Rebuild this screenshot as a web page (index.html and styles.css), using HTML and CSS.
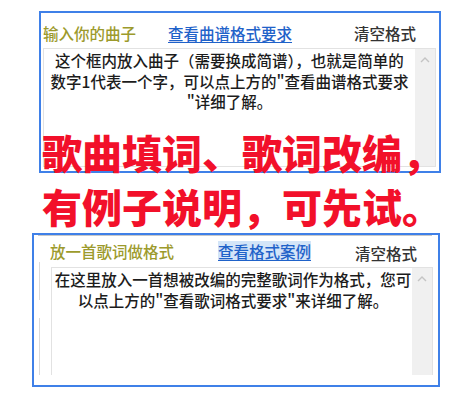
FILE: index.html
```
<!DOCTYPE html>
<html lang="zh-CN">
<head>
    <meta charset="UTF-8">
    <title>歌曲填词</title>
    <link rel="stylesheet" href="styles.css">
</head>
<body>
    <div class="panel panel-song">
        <div class="toolbar">
            <span class="label label-song">输入你的曲子</span>
            <a class="link link-song" href="#">查看曲谱格式要求</a>
            <span class="clear">清空格式</span>
        </div>
        <div class="editor editor-song">
            <div class="editor-text">这个框内放入曲子（需要换成简谱），也就是简单的<br>数字1代表一个字，可以点上方的"查看曲谱格式要求<br>"详细了解。</div>
            <div class="scrollbar">
                <svg width="10" height="6" viewBox="0 0 10 6"><polyline points="1,5 5,1 9,5" fill="none" stroke="#c4c4c4" stroke-width="1.4"/></svg>
            </div>
        </div>
    </div>

    <div class="promo">歌曲填词、歌词改编，<br>有例子说明，可先试。</div>

    <div class="panel panel-lyric">
        <div class="rule"></div>
        <div class="toolbar">
            <span class="label label-lyric">放一首歌词做格式</span>
            <a class="link link-lyric" href="#">查看格式案例</a>
            <span class="clear">清空格式</span>
        </div>
        <div class="editor-row">
            <div class="side-line"></div>
            <div class="editor editor-lyric">
                <div class="editor-text">在这里放入一首想被改编的完整歌词作为格式，您可<br>以点上方的"查看歌词格式要求"来详细了解。</div>
                <div class="scrollbar">
                    <svg width="10" height="6" viewBox="0 0 10 6"><polyline points="1,5 5,1 9,5" fill="none" stroke="#c4c4c4" stroke-width="1.4"/></svg>
                </div>
            </div>
        </div>
    </div>
</body>
</html>
```

FILE: styles.css
```
body {
    margin: 0;
    width: 472px;
    height: 396px;
    overflow: hidden;
    background: #fff;
    font-family: "Noto Sans CJK SC", "Noto Sans", sans-serif;
    color: #222;
}
.panel {
    box-sizing: border-box;
    border: 2px solid #3f80e8;
    display: flex;
    flex-direction: column;
}
.panel-song {
    margin: 11px 0 0 39px;
    width: 402px;
    height: 162px;
}
.panel-lyric {
    margin: 0 0 0 32px;
    width: 408px;
    height: 154px;
}
.toolbar {
    display: flex;
    align-items: center;
    height: 20px;
    font-size: 15.5px;
    line-height: 20px;
    font-weight: 500;
    white-space: nowrap;
}
.panel-song .toolbar {
    margin-top: 10px;
    padding-left: 2px;
}
.panel-lyric .toolbar {
    margin-top: 5px;
    padding-left: 16px;
}
.label {
    color: #9c9a2c;
}
.label-song {
    width: 125px;
}
.label-lyric {
    width: 168px;
}
.link {
    color: #1f62c9;
    text-decoration: underline;
    text-underline-offset: 2px;
}
.link-song {
    width: 186px;
}
.link-lyric {
    margin-right: 44px;
    background: #d3e5f8;
}
.clear {
    color: #333;
}
.panel-lyric .clear {
    margin-top: 3px;
}
.editor {
    display: flex;
    box-sizing: border-box;
    border: 1px solid #e2e2e2;
    background: #fff;
}
.editor-song {
    margin: 5px 3px 0 2px;
    height: 119px;
}
.editor-text {
    flex: 1;
    text-align: center;
    font-size: 15.5px;
    line-height: 20.5px;
    font-weight: 500;
    color: #1c1c1c;
    white-space: nowrap;
    overflow: hidden;
}
.editor-song .editor-text {
    padding-top: 1px;
}
.editor-lyric .editor-text {
    padding-top: 1px;
    padding-left: 2px;
}
.scrollbar {
    width: 20px;
    background: #f0f0f0;
    display: flex;
    justify-content: center;
    padding-top: 8px;
    box-sizing: border-box;
}
.promo {
    position: relative;
    margin: -48px 0 0 42px;
    font-size: 40px;
    line-height: 54px;
    font-weight: 900;
    color: #f2102a;
    white-space: nowrap;
}
.rule {
    height: 1px;
    margin: 0 6px 0 4px;
    background: #c8c8c8;
}
.editor-row {
    display: flex;
    align-items: flex-end;
    margin-top: 1px;
}
.side-line {
    width: 1px;
    height: 113px;
    margin-left: 5px;
    background: linear-gradient(#dadada 0 38px, transparent 38px 56px, #dadada 56px);
}
.editor-lyric {
    margin-left: 11px;
    width: 382px;
    height: 108px;
    border-bottom: none;
}
```
